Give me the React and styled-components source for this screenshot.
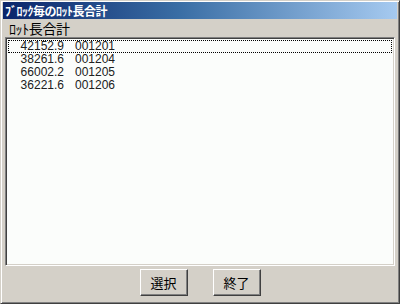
import React from "react";
import styled, { createGlobalStyle } from "styled-components";

const Global = createGlobalStyle`
  html, body { margin: 0; padding: 0; background: #d4d0c8; }
  body { width: 400px; height: 304px; overflow: hidden; }
`;

const Win = styled.div`
  box-sizing: border-box;
  width: 400px;
  height: 304px;
  background: #d4d0c8;
  border: 1px solid;
  border-color: #d4d0c8 #404040 #404040 #d4d0c8;
  box-shadow: inset 1px 1px 0 #ffffff, inset -1px -1px 0 #808080;
  padding: 1px 2px 2px 2px;
  display: flex;
  flex-direction: column;
  font-family: "Noto Sans CJK JP", sans-serif;
`;

const TitleBar = styled.div`
  height: 17px;
  background: linear-gradient(90deg, #0a246a 0%, #3a6ea5 45%, #a6caf0 100%);
  color: #ffffff;
  font-weight: bold;
  font-size: 12px;
  line-height: 17px;
  padding-left: 2px;
  letter-spacing: -0.5px;
  white-space: nowrap;
`;

const Body = styled.div`
  flex: 1;
  display: flex;
  flex-direction: column;
  padding: 2px 2px 0 2px;
`;

const Label = styled.div`
  font-size: 14px;
  line-height: 15px;
  height: 16px;
  padding-left: 4px;
  color: #000;
  letter-spacing: -0.4px;
`;

const ListBox = styled.div`
  box-sizing: border-box;
  height: 229px;
  background: #fbfdfb;
  border: 1px solid;
  border-color: #808080 #ffffff #ffffff #808080;
  box-shadow: inset 1px 1px 0 #404040, inset -1px -1px 0 #d4d0c8;
  padding: 2px 2px;
`;

const Row = styled.div`
  display: flex;
  height: 13px;
  line-height: 13px;
  font-family: "Liberation Sans", sans-serif;
  font-size: 12px;
  color: #202020;
  box-sizing: border-box;
  outline: ${(p) => (p.$focus ? "1px dotted #000" : "none")};
  outline-offset: -1px;
`;

const Num = styled.span`
  width: 56px;
  text-align: right;
`;

const Code = styled.span`
  margin-left: 11px;
`;

const Footer = styled.div`
  flex: 1;
  display: flex;
  justify-content: center;
  align-items: center;
  gap: 25px;
  padding-bottom: 2px;
`;

const Button = styled.button`
  box-sizing: border-box;
  width: 48px;
  height: 27px;
  background: #d4d0c8;
  border: 1px solid;
  border-color: #ffffff #404040 #404040 #ffffff;
  box-shadow: inset -1px -1px 0 #808080;
  font-family: "Noto Sans CJK JP", sans-serif;
  font-size: 13px;
  color: #000;
  padding: 0;
`;

const rows = [
  ["42152.9", "001201"],
  ["38261.6", "001204"],
  ["66002.2", "001205"],
  ["36221.6", "001206"],
];

export default function App() {
  return (
    <>
      <Global />
      <Win>
        <TitleBar>ﾌﾞﾛｯｸ毎のﾛｯﾄ長合計</TitleBar>
        <Body>
          <Label>ﾛｯﾄ長合計</Label>
          <ListBox>
            {rows.map((r, i) => (
              <Row key={i} $focus={i === 0}>
                <Num>{r[0]}</Num>
                <Code>{r[1]}</Code>
              </Row>
            ))}
          </ListBox>
          <Footer>
            <Button>選択</Button>
            <Button>終了</Button>
          </Footer>
        </Body>
      </Win>
    </>
  );
}
